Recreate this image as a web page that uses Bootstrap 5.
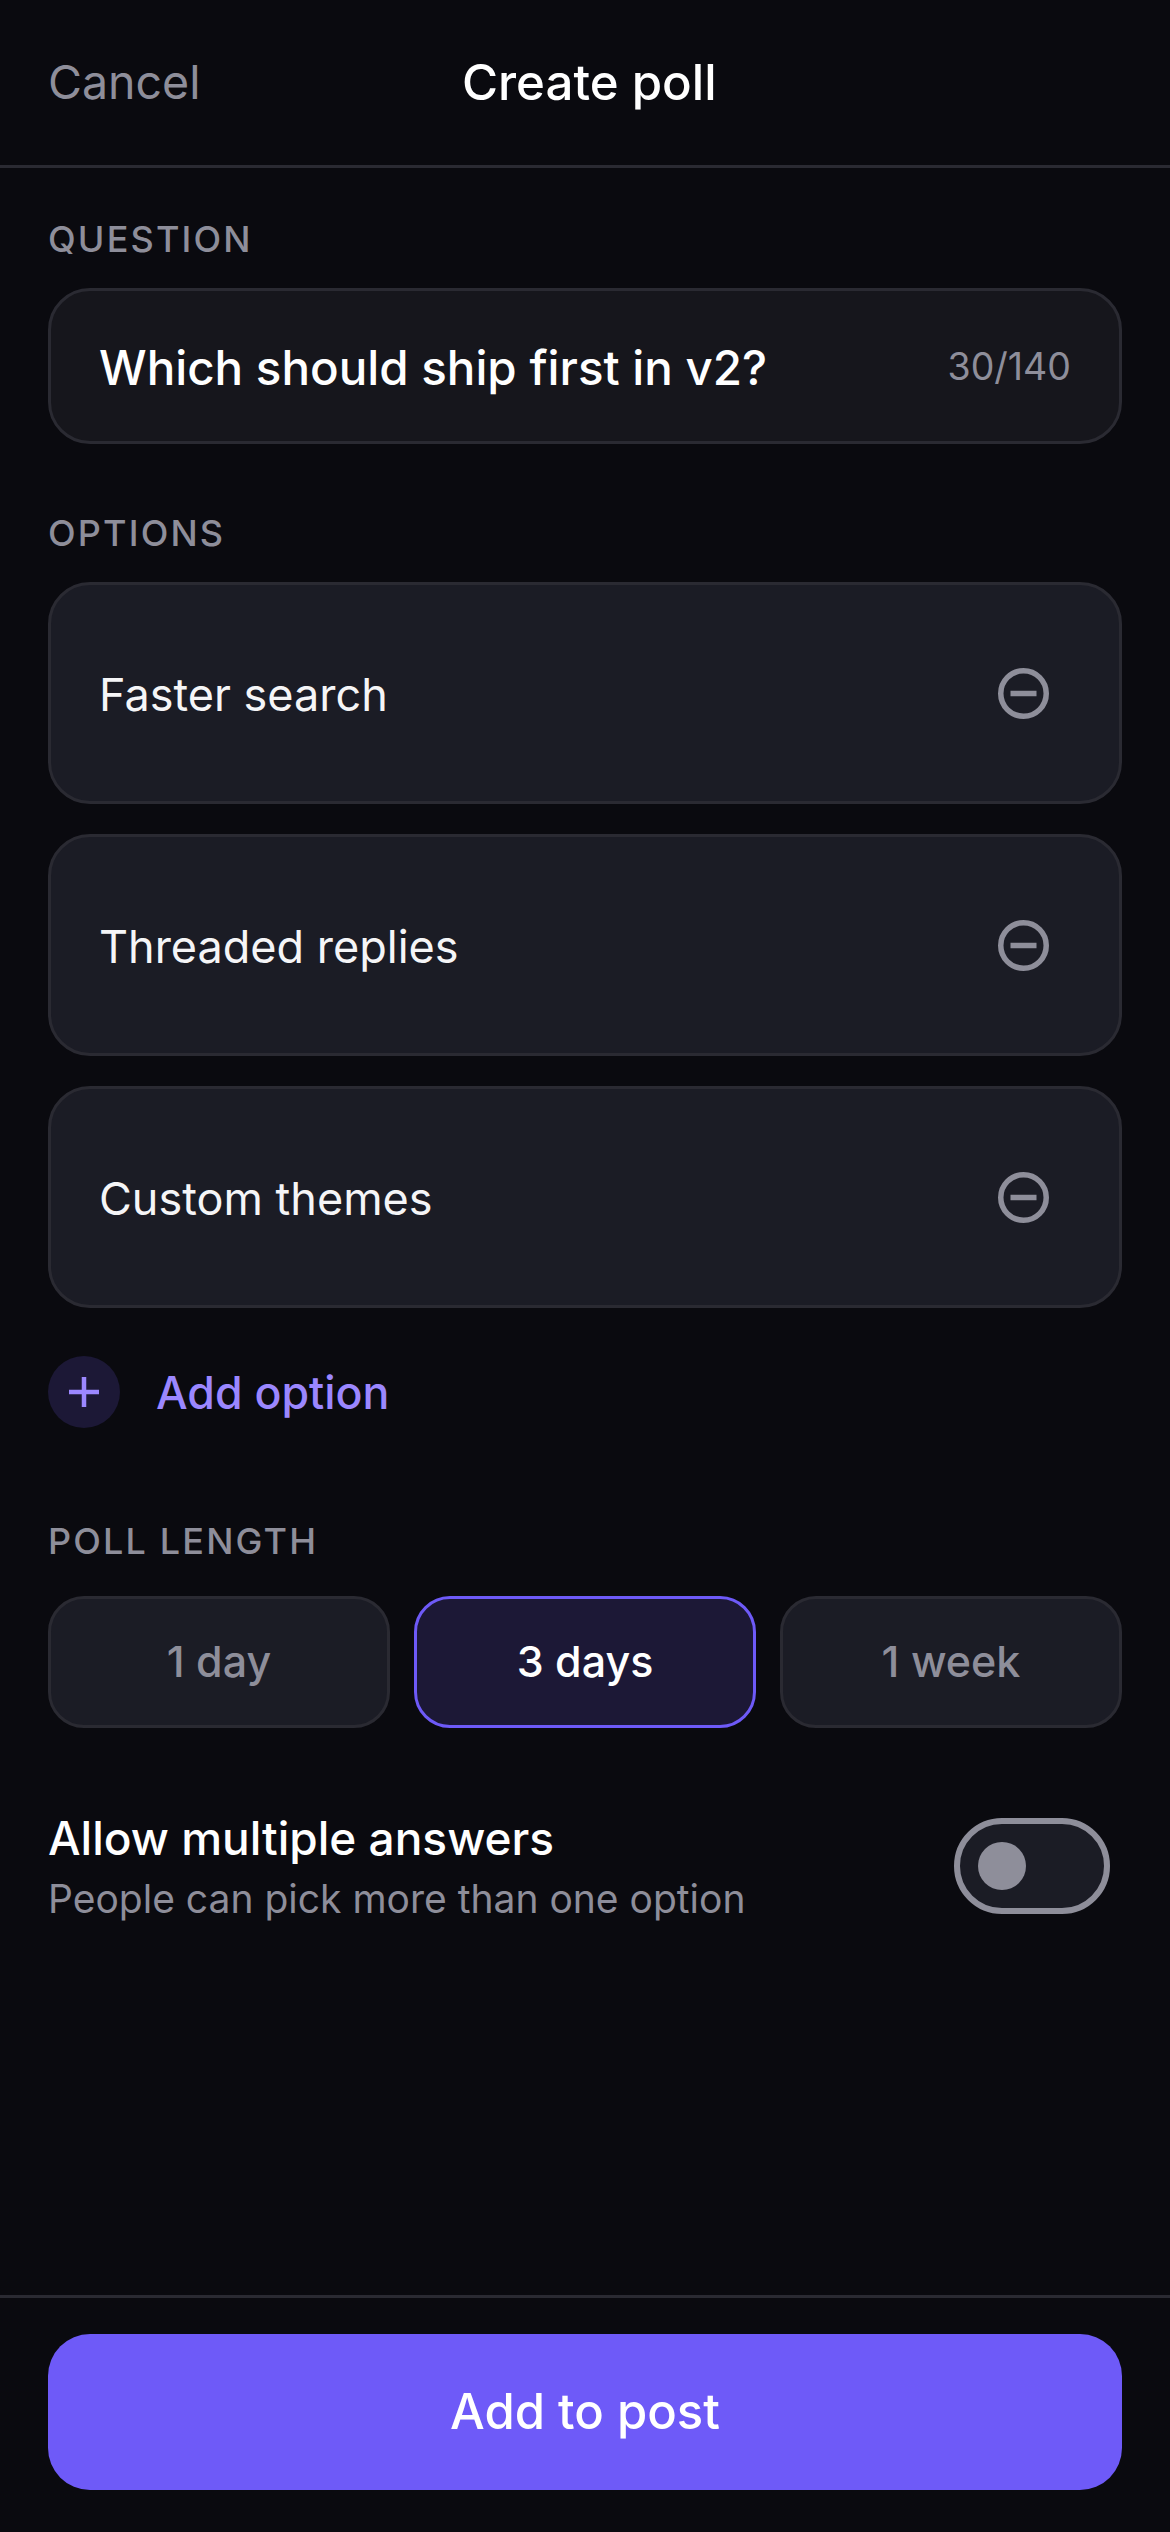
<!DOCTYPE html>
<html lang="en">
<head>
<meta charset="utf-8">
<title>Create poll</title>
<link rel="stylesheet" href="https://cdn.jsdelivr.net/npm/bootstrap@5.3.0/dist/css/bootstrap.min.css">
<style>
html,body{background:#0a0a0f;}
body{font-family:"Inter","Liberation Sans",sans-serif;color:#f5f5f7;}
.poll-screen{min-height:2532px;}
.poll-head{height:168px;padding:0 48px;border-bottom:3px solid #2a2a32;}
.poll-cancel{font-size:46.5px;color:#8e8e9a;line-height:1.2;}
.poll-title{font-size:49.2px;font-weight:500;color:#fff;line-height:1.2;}
.poll-spacer{width:144px;}
.poll-body{padding:48px 48px 0;}
.poll-label{font-size:36px;font-weight:500;letter-spacing:2.16px;color:#8e8e9a;line-height:46px;margin:0 0 26px;}
.poll-label-options{margin-top:66px;}
.poll-label-length{margin-top:90px;margin-bottom:32px;}
.poll-nudge{padding-top:3px;}
.poll-question{height:156px;padding:0 48px;background:#16161c;border:3px solid #2a2a32;border-radius:42px;}
.poll-qtext{font-size:47.5px;font-weight:500;color:#fff;}
.poll-count{font-size:37.5px;color:#8e8e9a;}
.poll-option{height:222px;padding:0 48px;background:#1b1c25;border:3px solid #2a2a32;border-radius:42px;font-size:45px;font-weight:400;color:#f5f5f7;}
.poll-options{gap:30px;}
.poll-minus{margin-right:22px;}
.poll-add{height:72px;gap:36px;font-size:44.7px;font-weight:500;color:#9b87ff;margin-top:48px;}
.poll-plus{width:72px;height:72px;background:#1c1836;}
.poll-seg{height:132px;padding:0 0 2px;background:#1b1c25;border:3px solid #2a2a32;border-radius:36px;font-size:43px;font-weight:500;color:#8e8e9a;}
.poll-seg.is-on{background:#1c1836;border-color:#6e5af8;color:#fff;}
.poll-segs{gap:24px;}
.poll-allow{margin-top:78px;}
.poll-strong{font-size:46px;font-weight:500;color:#fff;line-height:60px;padding-top:2px;}
.poll-sub{font-size:39px;color:#8e8e9a;line-height:54px;margin-top:4px;}
.poll-switch{width:156px;height:96px;padding-left:18px;background:#1b1c25;border:6px solid #8e8e9a;border-radius:48px;margin-right:12px;}
.poll-thumb{width:48px;height:48px;background:#8e8e9a;}
.poll-foot{padding:36px 48px 42px;border-top:3px solid #2a2a32;}
.poll-submit{height:156px;background:#6e5af8;border:0;border-radius:42px;color:#fff;font-size:49px;font-weight:500;}
</style>
</head>
<body>
<div class="poll-screen d-flex flex-column">
  <header class="poll-head d-flex align-items-center justify-content-between">
    <span class="poll-cancel">Cancel</span>
    <span class="poll-title">Create poll</span>
    <span class="poll-spacer"></span>
  </header>
  <main class="poll-body flex-grow-1">
    <p class="poll-label">QUESTION</p>
    <div class="poll-question d-flex align-items-center justify-content-between">
      <span class="poll-qtext poll-nudge">Which should ship first in v2?</span>
      <span class="poll-count poll-nudge">30/140</span>
    </div>
    <p class="poll-label poll-label-options">OPTIONS</p>
    <div class="poll-options d-flex flex-column">
      <div class="poll-option d-flex align-items-center justify-content-between"><span class="poll-nudge">Faster search</span>
        <svg class="poll-minus" width="51" height="51" viewBox="0 0 51 51" fill="none" stroke="#8e8e9a" stroke-width="5.5"><circle cx="25.5" cy="25.5" r="22.75"/><path d="M12.5 25.5h26"/></svg></div>
      <div class="poll-option d-flex align-items-center justify-content-between"><span class="poll-nudge">Threaded replies</span>
        <svg class="poll-minus" width="51" height="51" viewBox="0 0 51 51" fill="none" stroke="#8e8e9a" stroke-width="5.5"><circle cx="25.5" cy="25.5" r="22.75"/><path d="M12.5 25.5h26"/></svg></div>
      <div class="poll-option d-flex align-items-center justify-content-between"><span class="poll-nudge">Custom themes</span>
        <svg class="poll-minus" width="51" height="51" viewBox="0 0 51 51" fill="none" stroke="#8e8e9a" stroke-width="5.5"><circle cx="25.5" cy="25.5" r="22.75"/><path d="M12.5 25.5h26"/></svg></div>
    </div>
    <div class="poll-add d-flex align-items-center">
      <span class="poll-plus rounded-circle d-flex align-items-center justify-content-center">
        <svg width="30" height="30" viewBox="0 0 30 30" fill="none" stroke="#9b87ff" stroke-width="4.5"><path d="M0 15h30M15 0v30"/></svg></span>
      <span class="poll-nudge">Add option</span>
    </div>
    <p class="poll-label poll-label-length">POLL LENGTH</p>
    <div class="poll-segs d-flex">
      <button class="poll-seg btn flex-fill w-100" type="button">1 day</button>
      <button class="poll-seg is-on btn flex-fill w-100" type="button">3 days</button>
      <button class="poll-seg btn flex-fill w-100" type="button">1 week</button>
    </div>
    <div class="poll-allow d-flex align-items-center justify-content-between">
      <div>
        <div class="poll-strong">Allow multiple answers</div>
        <div class="poll-sub">People can pick more than one option</div>
      </div>
      <div class="poll-switch d-flex align-items-center" role="switch" aria-checked="false"><span class="poll-thumb rounded-circle"></span></div>
    </div>
  </main>
  <footer class="poll-foot">
    <button class="poll-submit btn w-100" type="button">Add to post</button>
  </footer>
</div>
<script src="https://cdn.jsdelivr.net/npm/bootstrap@5.3.0/dist/js/bootstrap.bundle.min.js"></script>
</body>
</html>
